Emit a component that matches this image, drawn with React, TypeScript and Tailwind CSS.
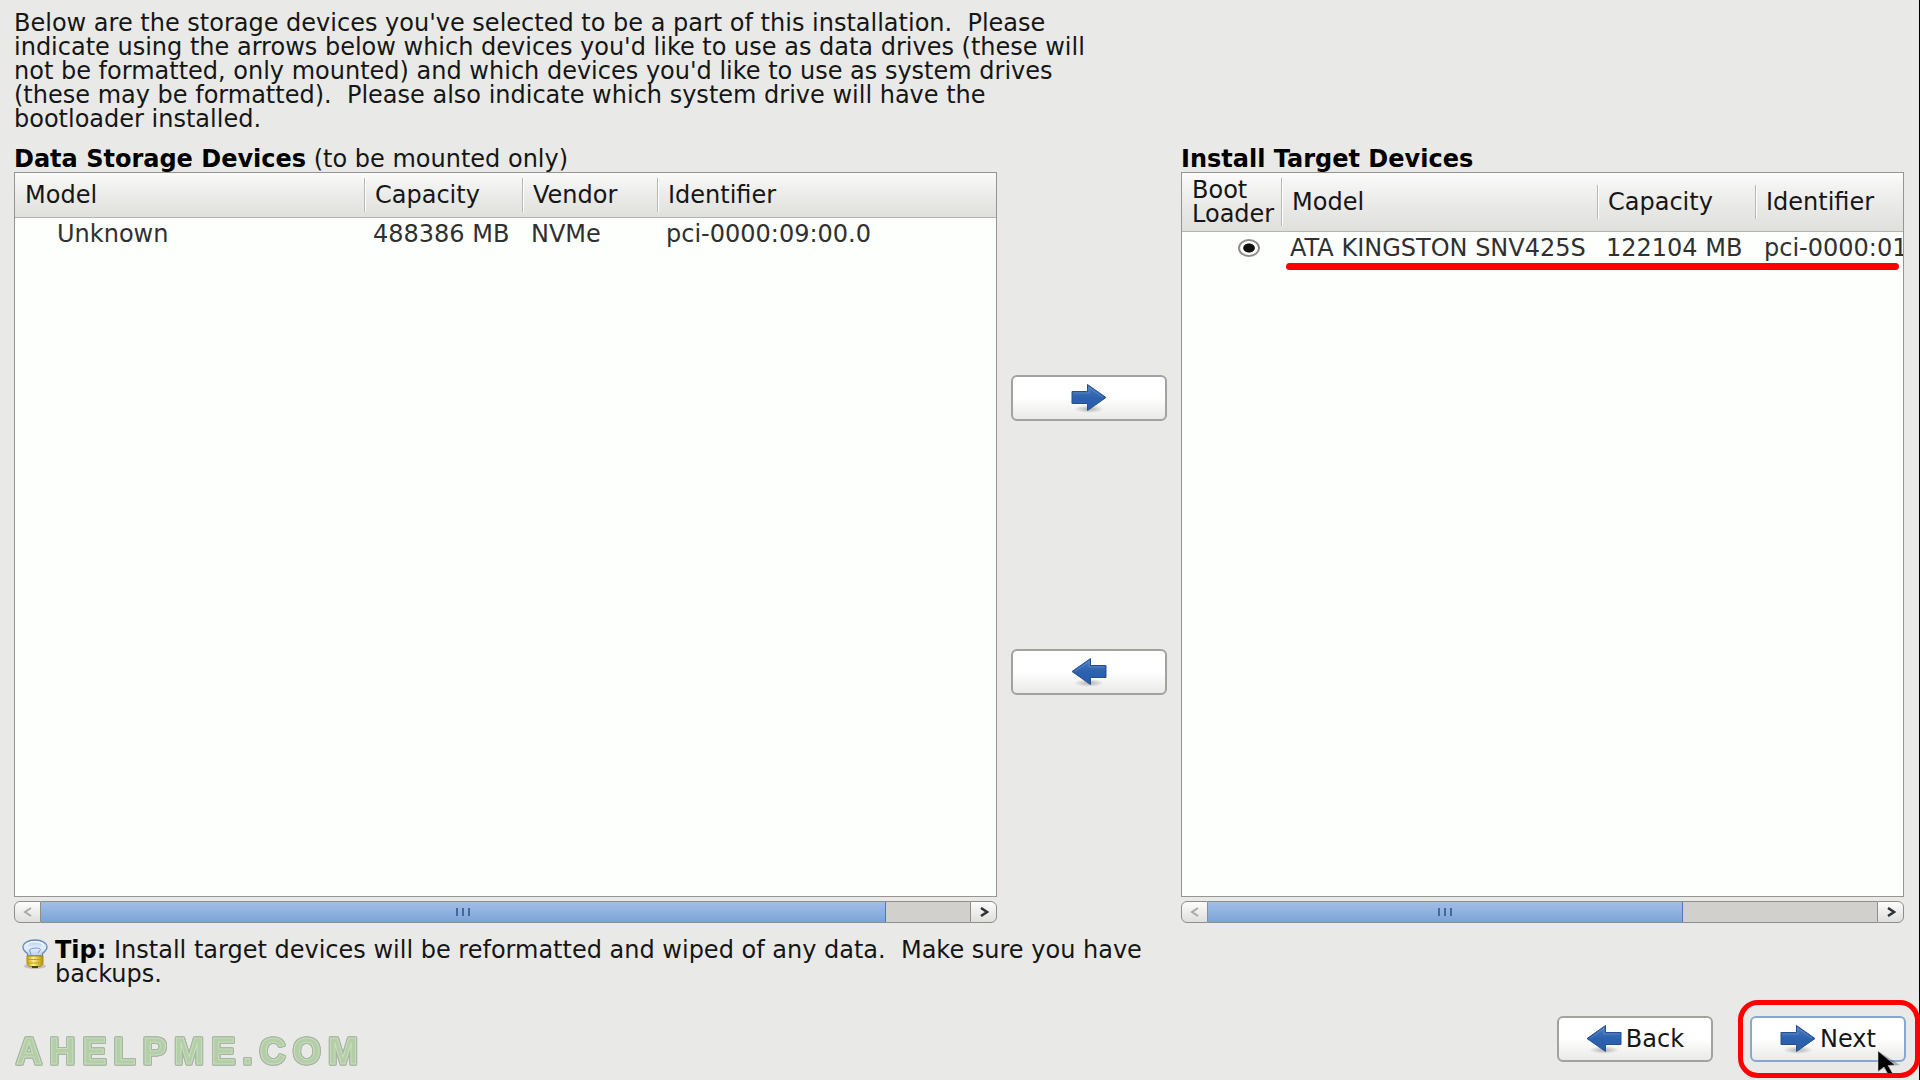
import { useState } from 'react';
import clsx from 'clsx';

const INTRO = `Below are the storage devices you've selected to be a part of this installation.  Please
indicate using the arrows below which devices you'd like to use as data drives (these will
not be formatted, only mounted) and which devices you'd like to use as system drives
(these may be formatted).  Please also indicate which system drive will have the
bootloader installed.`;

const dataDevices = [
  { model: 'Unknown', capacity: '488386 MB', vendor: 'NVMe', identifier: 'pci-0000:09:00.0' },
];

const targetDevices = [
  { model: 'ATA KINGSTON SNV425S', capacity: '122104 MB', identifier: 'pci-0000:01' },
];

function ArrowIcon({ left = false }: { left?: boolean }) {
  const id = left ? 'arrow-left' : 'arrow-right';
  return (
    <svg width="36" height="30" viewBox="0 0 36 30" aria-hidden="true">
      <defs>
        <linearGradient id={id} x1="0" y1="0" x2="0" y2="1">
          <stop offset="0" stopColor="#4f7dbd" />
          <stop offset="0.5" stopColor="#2c62ae" />
          <stop offset="1" stopColor="#2a5ca8" />
        </linearGradient>
        <radialGradient id={`${id}-shadow`}>
          <stop offset="0" stopColor="#000" stopOpacity="0.28" />
          <stop offset="1" stopColor="#000" stopOpacity="0" />
        </radialGradient>
      </defs>
      <ellipse cx="18" cy="26" rx="15" ry="4" fill={`url(#${id}-shadow)`} />
      <g transform={left ? 'matrix(-1 0 0 1 36 0)' : undefined}>
        <path
          d="M1 8.5H16.500V1.500L35 14.500L16.500 27.500V20.500H1Z"
          fill={`url(#${id})`}
          stroke="#274f8d"
          strokeWidth="1"
          strokeLinejoin="round"
        />
        <path d="M2.500 10H18V4.500L32 14.500" fill="none" stroke="#7fa3d6" strokeOpacity="0.4" />
      </g>
    </svg>
  );
}

function BulbIcon() {
  return (
    <svg className="mt-px shrink-0" width="26" height="30" viewBox="0 0 26 30" aria-hidden="true">
      <defs>
        <linearGradient id="glass" x1="0" y1="0" x2="0" y2="1">
          <stop offset="0" stopColor="#a9c6ee" />
          <stop offset="0.5" stopColor="#e6f0fb" />
          <stop offset="1" stopColor="#b5cdef" />
        </linearGradient>
        <linearGradient id="cap" x1="0" y1="0" x2="1" y2="0">
          <stop offset="0" stopColor="#c9a60c" />
          <stop offset="0.4" stopColor="#fbf08a" />
          <stop offset="1" stopColor="#b3920a" />
        </linearGradient>
      </defs>
      <ellipse cx="13" cy="27" rx="11" ry="3" fill="#000" fillOpacity="0.18" />
      <path
        d="M5.500 17V14.500C2.500 12.500 1 10.500 1 8C1 4 6 1 13 1S25 4 25 8C25 10.500 23 12.500 20.500 14.500V17Z"
        fill="url(#glass)"
        stroke="#6588bd"
        strokeWidth="1.300"
      />
      <path d="M4 7C5 4 9 2.800 13 2.800S21 4 22 7" fill="none" stroke="#f4f9ff" strokeWidth="1.500" />
      <path d="M9 16L7.500 11C8 9 18 8 18.500 10.500L16 14" fill="none" stroke="#7695c4" />
      <path d="M5 17H21V24.500L18.500 27.500H7.500L5 24.500Z" fill="url(#cap)" stroke="#a98b10" />
      <path d="M5 20.500H21M5 24H21" stroke="#c2a012" strokeWidth="1.200" />
      <path d="M10 28H16" stroke="#4b4010" strokeWidth="2" />
    </svg>
  );
}

function Pointer() {
  return (
    <svg
      className="pointer-events-none absolute top-[35px] left-[127px]"
      width="26"
      height="28"
      viewBox="0 0 26 28"
      aria-hidden="true"
    >
      <path d="M1 0V21L7 17L12 26L16 24L12 15L23 14Z" fill="#000" fillOpacity="0.25" />
      <path d="M1 0L18 14L11 14.500L15.500 22L11.500 24L7 16L1 20.500Z" fill="#000" stroke="#ddd" strokeWidth="0.500" />
    </svg>
  );
}

type ScrollBarProps = { label: string; thumb: string };

function ScrollBar({ label, thumb }: ScrollBarProps) {
  const end =
    'flex w-[27px] shrink-0 items-center justify-center border border-[#8f8e8b] bg-linear-to-b from-[#fdfdfd] to-[#dededb]';
  return (
    <div className="mt-1 flex h-[22px]" role="group" aria-label={label}>
      <button className={clsx(end, 'rounded-l-md text-[#a9a9a6]')} aria-label="Scroll left">
        <svg width="10" height="10" viewBox="0 0 10 10">
          <path d="M8 1L2 5L8 9" fill="none" stroke="currentColor" strokeWidth="2" />
        </svg>
      </button>
      <div className="flex-1 border-y border-[#8f8e8b] bg-[#d1d0cc]">
        <div
          className={clsx(
            'flex h-full items-center justify-center gap-1 border-r border-[#5278ad] bg-linear-to-b from-[#a0bfe6] to-[#7ca3d8]',
            thumb,
          )}
        >
          <span className="h-2 w-0.5 bg-[#46689c]" />
          <span className="h-2 w-0.5 bg-[#46689c]" />
          <span className="h-2 w-0.5 bg-[#46689c]" />
        </div>
      </div>
      <button className={clsx(end, 'rounded-r-md text-[#2e3436]')} aria-label="Scroll right">
        <svg width="10" height="10" viewBox="0 0 10 10">
          <path d="M2 1L8 5L2 9" fill="none" stroke="currentColor" strokeWidth="2.500" />
        </svg>
      </button>
    </div>
  );
}

function HeaderCell({ children, last = false }: { children: React.ReactNode; last?: boolean }) {
  return (
    <th className="py-[5px] font-normal" scope="col">
      <div
        className={clsx(
          'flex h-full min-h-[34px] items-center pl-2.5',
          !last && 'border-r border-[#b9b8b4] shadow-[1px_0_0_#fff]',
        )}
      >
        {children}
      </div>
    </th>
  );
}

const panel = 'relative flex-1 overflow-hidden border border-[#969591] bg-[#fdfffc]';
const headRow =
  'h-px border-b border-[#b5b3ae] bg-linear-to-b from-[#fafbfa] via-[#ebebe9] to-[#dfdfdc] text-left';
const button =
  'flex h-[46px] w-[156px] items-center justify-center gap-1 rounded-md border-2 bg-linear-to-b from-[#fefffe] from-50% to-[#eaeae8]';

export default function App() {
  const [bootDevice, setBootDevice] = useState(0);

  return (
    <main className="flex min-h-screen flex-col border-r border-black bg-[#e9eae7] pt-[11px] pr-[15px] pl-3.5 font-['DejaVu_Sans',sans-serif] text-2xl leading-6 text-[#161616]">
      <p className="whitespace-pre-wrap">{INTRO}</p>

      <div className="mt-4 grid flex-1 grid-cols-[983fr_156px_723fr] gap-x-3.5">
        <section className="flex min-w-0 flex-col">
          <h2 className="pb-px">
            <b className="text-black">Data Storage Devices</b> (to be mounted only)
          </h2>
          <div className={panel}>
            <table className="w-full table-fixed border-collapse whitespace-nowrap">
              <colgroup>
                <col className="w-[350px]" />
                <col className="w-[158px]" />
                <col className="w-[135px]" />
                <col />
              </colgroup>
              <thead>
                <tr className={headRow}>
                  <HeaderCell>Model</HeaderCell>
                  <HeaderCell>Capacity</HeaderCell>
                  <HeaderCell>Vendor</HeaderCell>
                  <HeaderCell last>Identifier</HeaderCell>
                </tr>
              </thead>
              <tbody>
                {dataDevices.map((d) => (
                  <tr key={d.identifier} className="h-8 text-[#303030]">
                    <td className="pl-[42px]">{d.model}</td>
                    <td className="pl-2">{d.capacity}</td>
                    <td className="pl-2">{d.vendor}</td>
                    <td className="pl-2">{d.identifier}</td>
                  </tr>
                ))}
              </tbody>
            </table>
          </div>
          <ScrollBar label="Data storage devices" thumb="w-[91%]" />
        </section>

        <div className="flex flex-col items-center justify-center gap-[228px]">
          <button className={clsx(button, 'border-[#a3a29e]')} aria-label="Move to install targets">
            <ArrowIcon />
          </button>
          <button className={clsx(button, 'border-[#a3a29e]')} aria-label="Move to data storage">
            <ArrowIcon left />
          </button>
        </div>

        <section className="flex min-w-0 flex-col">
          <h2 className="pb-px font-bold text-black">Install Target Devices</h2>
          <div className={panel}>
            <table className="w-full table-fixed border-collapse whitespace-nowrap">
              <colgroup>
                <col className="w-[100px]" />
                <col className="w-[316px]" />
                <col className="w-[158px]" />
                <col />
              </colgroup>
              <thead>
                <tr className={headRow}>
                  <HeaderCell>
                    Boot
                    <br />
                    Loader
                  </HeaderCell>
                  <HeaderCell>Model</HeaderCell>
                  <HeaderCell>Capacity</HeaderCell>
                  <HeaderCell last>Identifier</HeaderCell>
                </tr>
              </thead>
              <tbody>
                {targetDevices.map((d, i) => (
                  <tr key={d.identifier} className="h-8 text-[#303030]">
                    <td className="pl-[56px]">
                      <input
                        type="radio"
                        name="boot"
                        aria-label={`Boot from ${d.model}`}
                        checked={bootDevice === i}
                        onChange={() => setBootDevice(i)}
                        className="block h-[18px] w-[22px] appearance-none rounded-[50%] border-2 border-[#8c8c8a] bg-white checked:bg-[radial-gradient(ellipse_at_center,#111_42%,transparent_50%)]"
                      />
                    </td>
                    <td className="pl-2">{d.model}</td>
                    <td className="pl-2">{d.capacity}</td>
                    <td className="overflow-hidden pl-2">{d.identifier}</td>
                  </tr>
                ))}
              </tbody>
            </table>
            <div className="absolute top-[90px] right-1 left-[104px] h-[7px] rounded-full bg-[#fe0000]" />
          </div>
          <ScrollBar label="Install target devices" thumb="w-[71%]" />
        </section>
      </div>

      <div className="mt-[15px] flex gap-[7px] pl-2">
        <BulbIcon />
        <p>
          <b className="text-black">Tip:</b>
          <span className="whitespace-pre">
            {' Install target devices will be reformatted and wiped of any data.  Make sure you have'}
          </span>
          <span className="block">backups.</span>
        </p>
      </div>

      <footer className="mt-[30px] -mr-0.5 flex items-start justify-between pb-3">
        <div className="mt-5 pl-0.5 font-['Liberation_Sans',sans-serif] text-4xl leading-8 font-bold tracking-[0.2em] text-[#b4cfa8] [-webkit-text-stroke:1px_#c6dfbd] [filter:drop-shadow(1px_0_0_#a9b5a4)_drop-shadow(-1px_0_0_#a9b5a4)_drop-shadow(0_1px_0_#a9b5a4)_drop-shadow(0_-1px_0_#a9b5a4)]">
          AHELPME.COM
        </div>
        <div className="flex gap-[37px]">
          <button className={clsx(button, 'border-[#a3a29e]')}>
            <ArrowIcon left />
            Back
          </button>
          <div className="relative">
            <button className={clsx(button, 'border-[#87a6d3]')}>
              <ArrowIcon />
              Next
            </button>
            <Pointer />
            <div className="pointer-events-none absolute -top-4 -right-3.5 -bottom-4 -left-3 rounded-[20px] border-5 border-[#fe0000]" />
          </div>
        </div>
      </footer>
    </main>
  );
}
